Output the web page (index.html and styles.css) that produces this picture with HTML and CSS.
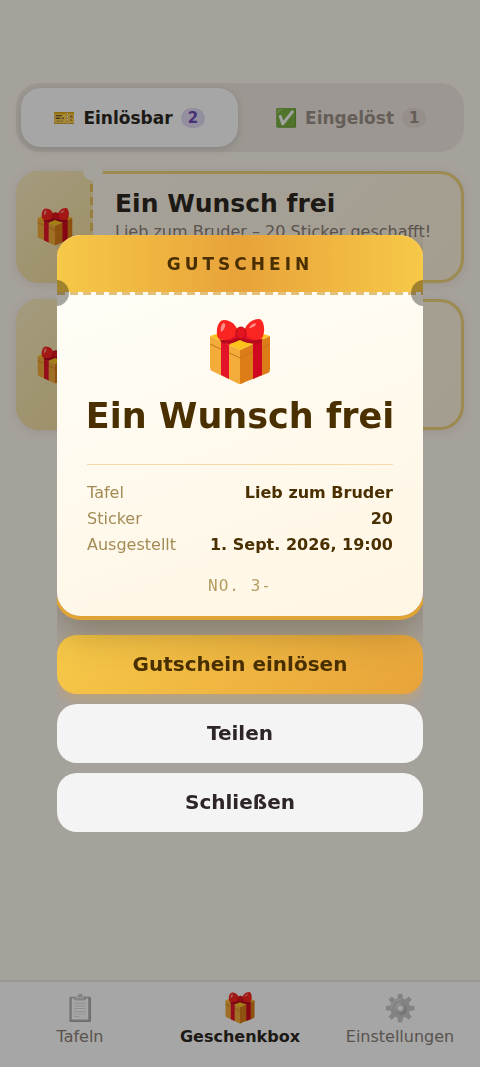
FILE: index.html
```html
<!DOCTYPE html>
<html lang="de">

<head>
    <meta charset="UTF-8">
    <meta name="viewport" content="width=device-width, initial-scale=1.0">
    <title>Geschenkbox</title>
    <link rel="stylesheet" href="styles.css">
</head>

<body>

    <!-- Gift box, shared by the coupons, the ticket and the navigation -->
    <svg class="sprite" aria-hidden="true">
        <symbol id="gift" viewBox="0 0 62 66">
            <path fill="#f3ab3a" d="M1 17 31 31V65Q29 65 26 63L3 52Q1 51 1 48Z" />
            <path fill="#dc7d17" d="M61 17 31 31V65Q33 65 36 63L59 54Q61 53 61 50Z" />
            <path fill="#fcc31c" d="M1 17 31 8 61 17 31 31Z" />
            <path fill="none" stroke="#c9731a" stroke-width="1" d="M1 25 31 39 61 25" />
            <path fill="#e3142a" d="M12 22 20 26V60L12 56Z" />
            <path fill="#d0081f" d="M44 25 53 20V56L44 60Z" />
            <path fill="#e3142a" d="M12 22 31 12 53 20 44 25 31 18 20 26Z" />
            <path fill="#b30a1c" d="M10 20Q20 24 31 17Q42 24 54 20L51 24Q40 26 31 21Q22 26 13 24Z" />
            <path fill="#fa2420" d="M9 19C6 12 9 1 15 1C22 1 27 6 29 12C26 19 18 24 9 19Z" />
            <path fill="#fa2420" d="M53 19C57 13 55 0 50 0C42 0 37 6 35 12C38 20 46 23 53 19Z" />
            <path fill="#ff8d88" d="M12 13C11 8 13 4 15 4C18 5 15 12 12 13ZM40 9C42 5 47 3 47 5C47 7 43 9 40 9Z" />
            <ellipse fill="#e4141f" stroke="#b30a1c" cx="32" cy="14" rx="5" ry="6" />
        </symbol>
    </svg>

    <main class="page">
        <div class="tabs">
            <button class="tab active" type="button"><span class="tab-icon">🎫</span>Einlösbar <span class="count">2</span></button>
            <button class="tab" type="button"><span class="tab-icon">✅</span>Eingelöst <span class="count">1</span></button>
        </div>

        <div class="coupons">
            <article class="coupon">
                <div class="stub"><svg class="gift"><use href="#gift" /></svg></div>
                <div class="info">
                    <h2>Ein Wunsch frei</h2>
                    <p>Lieb zum Bruder – 20 Sticker geschafft!</p>
                </div>
            </article>
            <article class="coupon">
                <div class="stub"><svg class="gift"><use href="#gift" /></svg></div>
            </article>
        </div>
    </main>

    <nav class="bottom-nav">
        <a href="#tafeln"><span class="nav-icon">📋</span>Tafeln</a>
        <a href="#geschenkbox" class="active"><span class="nav-icon"><svg class="gift"><use href="#gift" /></svg></span>Geschenkbox</a>
        <a href="#einstellungen"><span class="nav-icon">⚙️</span>Einstellungen</a>
    </nav>

    <div class="overlay">
        <div class="dialog" role="dialog">
            <section class="ticket">
                <header class="ticket-head">GUTSCHEIN</header>
                <div class="ticket-body">
                    <svg class="gift"><use href="#gift" /></svg>
                    <h1>Ein Wunsch frei</h1>
                    <dl class="facts">
                        <div><dt>Tafel</dt><dd>Lieb zum Bruder</dd></div>
                        <div><dt>Sticker</dt><dd>20</dd></div>
                        <div><dt>Ausgestellt</dt><dd>1. Sept. 2026, 19:00</dd></div>
                    </dl>
                    <p class="serial">NO. 3-</p>
                </div>
            </section>
            <button class="btn gold" type="button">Gutschein einlösen</button>
            <button class="btn" type="button">Teilen</button>
            <button class="btn" type="button">Schließen</button>
        </div>
    </div>

</body>

</html>
```

FILE: styles.css
```css
* {
    box-sizing: border-box;
}

body {
    margin: 0;
    min-height: 100vh;
    background: #fef7ef;
    color: #2d2823;
    font-family: "DejaVu Sans", sans-serif;
    font-size: 16px;
}

h1,
h2,
p,
dl,
dd {
    margin: 0;
}

button {
    font-family: inherit;
    border: none;
}

.sprite {
    position: absolute;
    width: 0;
    height: 0;
}

.gift {
    display: block;
    width: 36px;
    height: 38px;
}

.page {
    padding: 83px 16px 100px;
}

/* Tabs */

.tabs {
    display: flex;
    gap: 5px;
    padding: 5px;
    border-radius: 24px;
    background: #f0e9e0;
}

.tab {
    flex: 1;
    display: flex;
    align-items: center;
    justify-content: center;
    gap: 8px;
    height: 59px;
    padding: 0;
    border-radius: 20px;
    background: none;
    color: #9c9188;
    font-size: 17px;
    font-weight: bold;
}

.tab.active {
    background: #fff;
    color: #2d2823;
    box-shadow: 0 2px 8px rgba(0, 0, 0, 0.15);
}

.tab-icon {
    font-size: 18px;
}

.count {
    padding: 0 7px;
    border-radius: 10px;
    background: #e6dad4;
    font-size: 15px;
    line-height: 20px;
}

.tab.active .count {
    background: #e4dcf4;
    color: #6c4ab6;
}

/* Coupons */

.coupons {
    display: flex;
    flex-direction: column;
    gap: 16px;
    margin-top: 19px;
}

.coupon {
    position: relative;
    display: flex;
    min-height: 112px;
    border: 3px solid #f0d47c;
    border-left: none;
    border-radius: 24px;
    background: linear-gradient(135deg, #fffaf0, #fdf3dc);
    box-shadow: 0 2px 10px rgba(120, 90, 60, 0.12);
}

.coupon + .coupon {
    min-height: 131px;
}

.stub {
    flex: none;
    display: flex;
    align-items: center;
    justify-content: center;
    width: 77px;
    margin: -3px 0;
    border-radius: 24px 0 0 24px;
    background:
        repeating-linear-gradient(#e8c060 0 8px, transparent 8px 13px) right / 3px 100% no-repeat,
        linear-gradient(135deg, #fdeec2, #f0dc9c);
}

/* punched hole above the perforation */
.coupon::before {
    content: "";
    position: absolute;
    top: -13px;
    left: 67px;
    width: 20px;
    height: 20px;
    border-radius: 50%;
    background: #fef7ef;
}

.info {
    padding: 14px 22px;
}

.info h2 {
    font-size: 25px;
    line-height: 32px;
}

.info p {
    color: #8a7f76;
    font-size: 16px;
    line-height: 24px;
}

/* Bottom navigation */

.bottom-nav {
    position: fixed;
    right: 0;
    bottom: 0;
    left: 0;
    display: flex;
    height: 87px;
    padding-top: 9px;
    border-top: 2px solid #efe9df;
    background: #fff;
}

.bottom-nav a {
    flex: 1;
    display: flex;
    flex-direction: column;
    align-items: center;
    color: #8a8078;
    font-size: 16px;
    line-height: 24px;
    text-decoration: none;
}

.bottom-nav a.active {
    color: #2d2823;
    font-weight: bold;
}

.nav-icon {
    display: flex;
    align-items: center;
    height: 34px;
    font-size: 26px;
    line-height: 34px;
    filter: grayscale(1);
    opacity: 0.6;
}

.bottom-nav .active .nav-icon {
    filter: none;
    opacity: 1;
}

.nav-icon .gift {
    width: 30px;
    height: 32px;
}

/* Dialog */

.overlay {
    position: fixed;
    inset: 0;
    display: flex;
    align-items: center;
    justify-content: center;
    padding: 0 57px;
    background: rgba(0, 0, 0, 0.35);
}

.dialog {
    display: flex;
    flex-direction: column;
    gap: 10px;
    width: 100%;
    max-width: 420px;
    overflow: hidden;
}

.ticket {
    position: relative;
    margin-bottom: 9px;
    border-radius: 24px;
    background: linear-gradient(160deg, #fffef8, #fff6e4);
    box-shadow: 0 2px 0 2px #e0a436, 0 12px 40px rgba(80, 60, 20, 0.45);
}

.ticket-head {
    padding: 19px 0 20px;
    border-radius: 24px 24px 0 0;
    background:
        repeating-linear-gradient(90deg, #e0c07a 0 8px, #fffdf5 8px 13px) bottom / 100% 3px no-repeat,
        linear-gradient(90deg, #f7c948, #e8a33a 50%, #f7c948);
    color: #4a3000;
    font-size: 17px;
    font-weight: bold;
    letter-spacing: 4px;
    line-height: 21px;
    text-align: center;
}

/* half holes at both ends of the perforation */
.ticket::before,
.ticket::after {
    content: "";
    position: absolute;
    top: 45px;
    left: -14px;
    width: 26px;
    height: 26px;
    border-radius: 50%;
    background: rgba(0, 0, 0, 0.35);
}

.ticket::after {
    right: -14px;
    left: auto;
}

.ticket-body {
    padding: 24px 30px 20px;
    text-align: center;
}

.ticket .gift {
    width: 62px;
    height: 66px;
    margin: 0 auto;
}

.ticket h1 {
    margin: 10px -10px 0;
    color: #4a3000;
    font-size: 35px;
    line-height: 42px;
    white-space: nowrap;
}

.facts {
    display: flex;
    flex-direction: column;
    gap: 6px;
    margin-top: 27px;
    padding-top: 18px;
    border-top: 1px solid #f7d9ac;
    font-size: 16px;
    line-height: 20px;
}

.facts div {
    display: flex;
    justify-content: space-between;
}

.facts dt {
    color: #a38b55;
}

.facts dd {
    color: #4a3000;
    font-weight: bold;
}

.serial {
    margin-top: 21px;
    color: #b59c60;
    font-family: "DejaVu Sans Mono", monospace;
    font-size: 16px;
    letter-spacing: 1px;
    line-height: 20px;
}

.btn {
    flex: none;
    height: 59px;
    padding: 0 0 2px;
    border-radius: 20px;
    background: #f4f4f4;
    color: #2d2528;
    font-size: 20px;
    font-weight: bold;
}

.btn.gold {
    background: linear-gradient(135deg, #f7c948, #e8a33a);
    box-shadow: 0 4px 14px rgba(232, 163, 58, 0.4);
    color: #4a3000;
}
```
